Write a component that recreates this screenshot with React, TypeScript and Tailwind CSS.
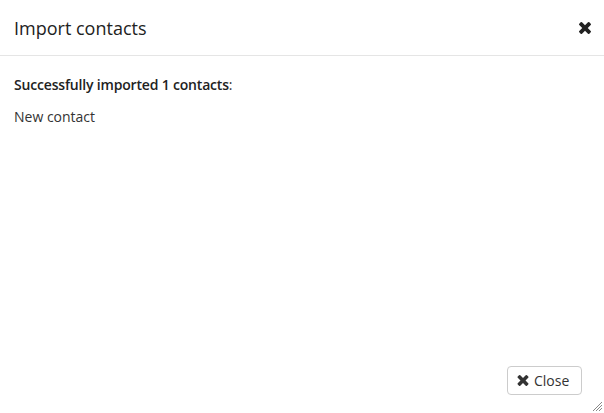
import React from 'react';

// FontAwesome 4 style "times" glyph
function TimesIcon({ className }: { className?: string }) {
  return (
    <svg viewBox="110 366 1188 1188" className={className} fill="currentColor">
      <path d="M1298 1322q0 40-28 68l-136 136q-28 28-68 28t-68-28l-294-294-294 294q-28 28-68 28t-68-28l-136-136q-28-28-28-68t28-68l294-294-294-294q-28-28-28-68t28-68l136-136q28-28 68-28t68 28l294 294 294-294q28-28 68-28t68 28l136 136q28 28 28 68t-28 68l-294 294 294 294q28 28 28 68z" />
    </svg>
  );
}

export default function App() {
  return (
    <div
      className="w-[604px] h-[413px] bg-white text-[#333] flex flex-col relative overflow-hidden"
      style={{ fontFamily: '"Open Sans", "Liberation Sans", sans-serif' }}
    >
      {/* header */}
      <div className="h-[56px] shrink-0 flex items-center justify-between pl-[14px] pr-[13px] border-b border-[#e5e5e5]">
        <h1 className="text-[18px] leading-none font-normal text-[#222]">Import contacts</h1>
        <button className="w-[12px] h-[12px] text-[#222] flex items-center justify-center">
          <TimesIcon className="w-[12px] h-[12px]" />
        </button>
      </div>

      {/* body */}
      <div className="flex-1 px-[14px] pt-[19px] text-[14px] leading-[20px]">
        <p>
          <span className="font-semibold text-[#222] tracking-[-0.18px]">Successfully imported 1 contacts</span>:
        </p>
        <p className="mt-[12px]">New contact</p>
      </div>

      {/* footer */}
      <div className="flex justify-end pr-[22px] pb-[18px]">
        <button className="h-[29px] w-[75px] pl-[9px] flex items-center gap-[5px] border border-[#ccc] rounded-[4px] bg-white text-[14px] text-[#333]">
          <TimesIcon className="w-[12px] h-[11px] text-[#333]" />
          Close
        </button>
      </div>

      {/* resize grip */}
      <svg className="absolute right-[2px] bottom-[2px] w-[10px] h-[10px]" viewBox="0 0 10 10">
        <path d="M10 1 L1 10 M10 4 L4 10 M10 7 L7 10" stroke="#888" strokeWidth="1" />
      </svg>
    </div>
  );
}
